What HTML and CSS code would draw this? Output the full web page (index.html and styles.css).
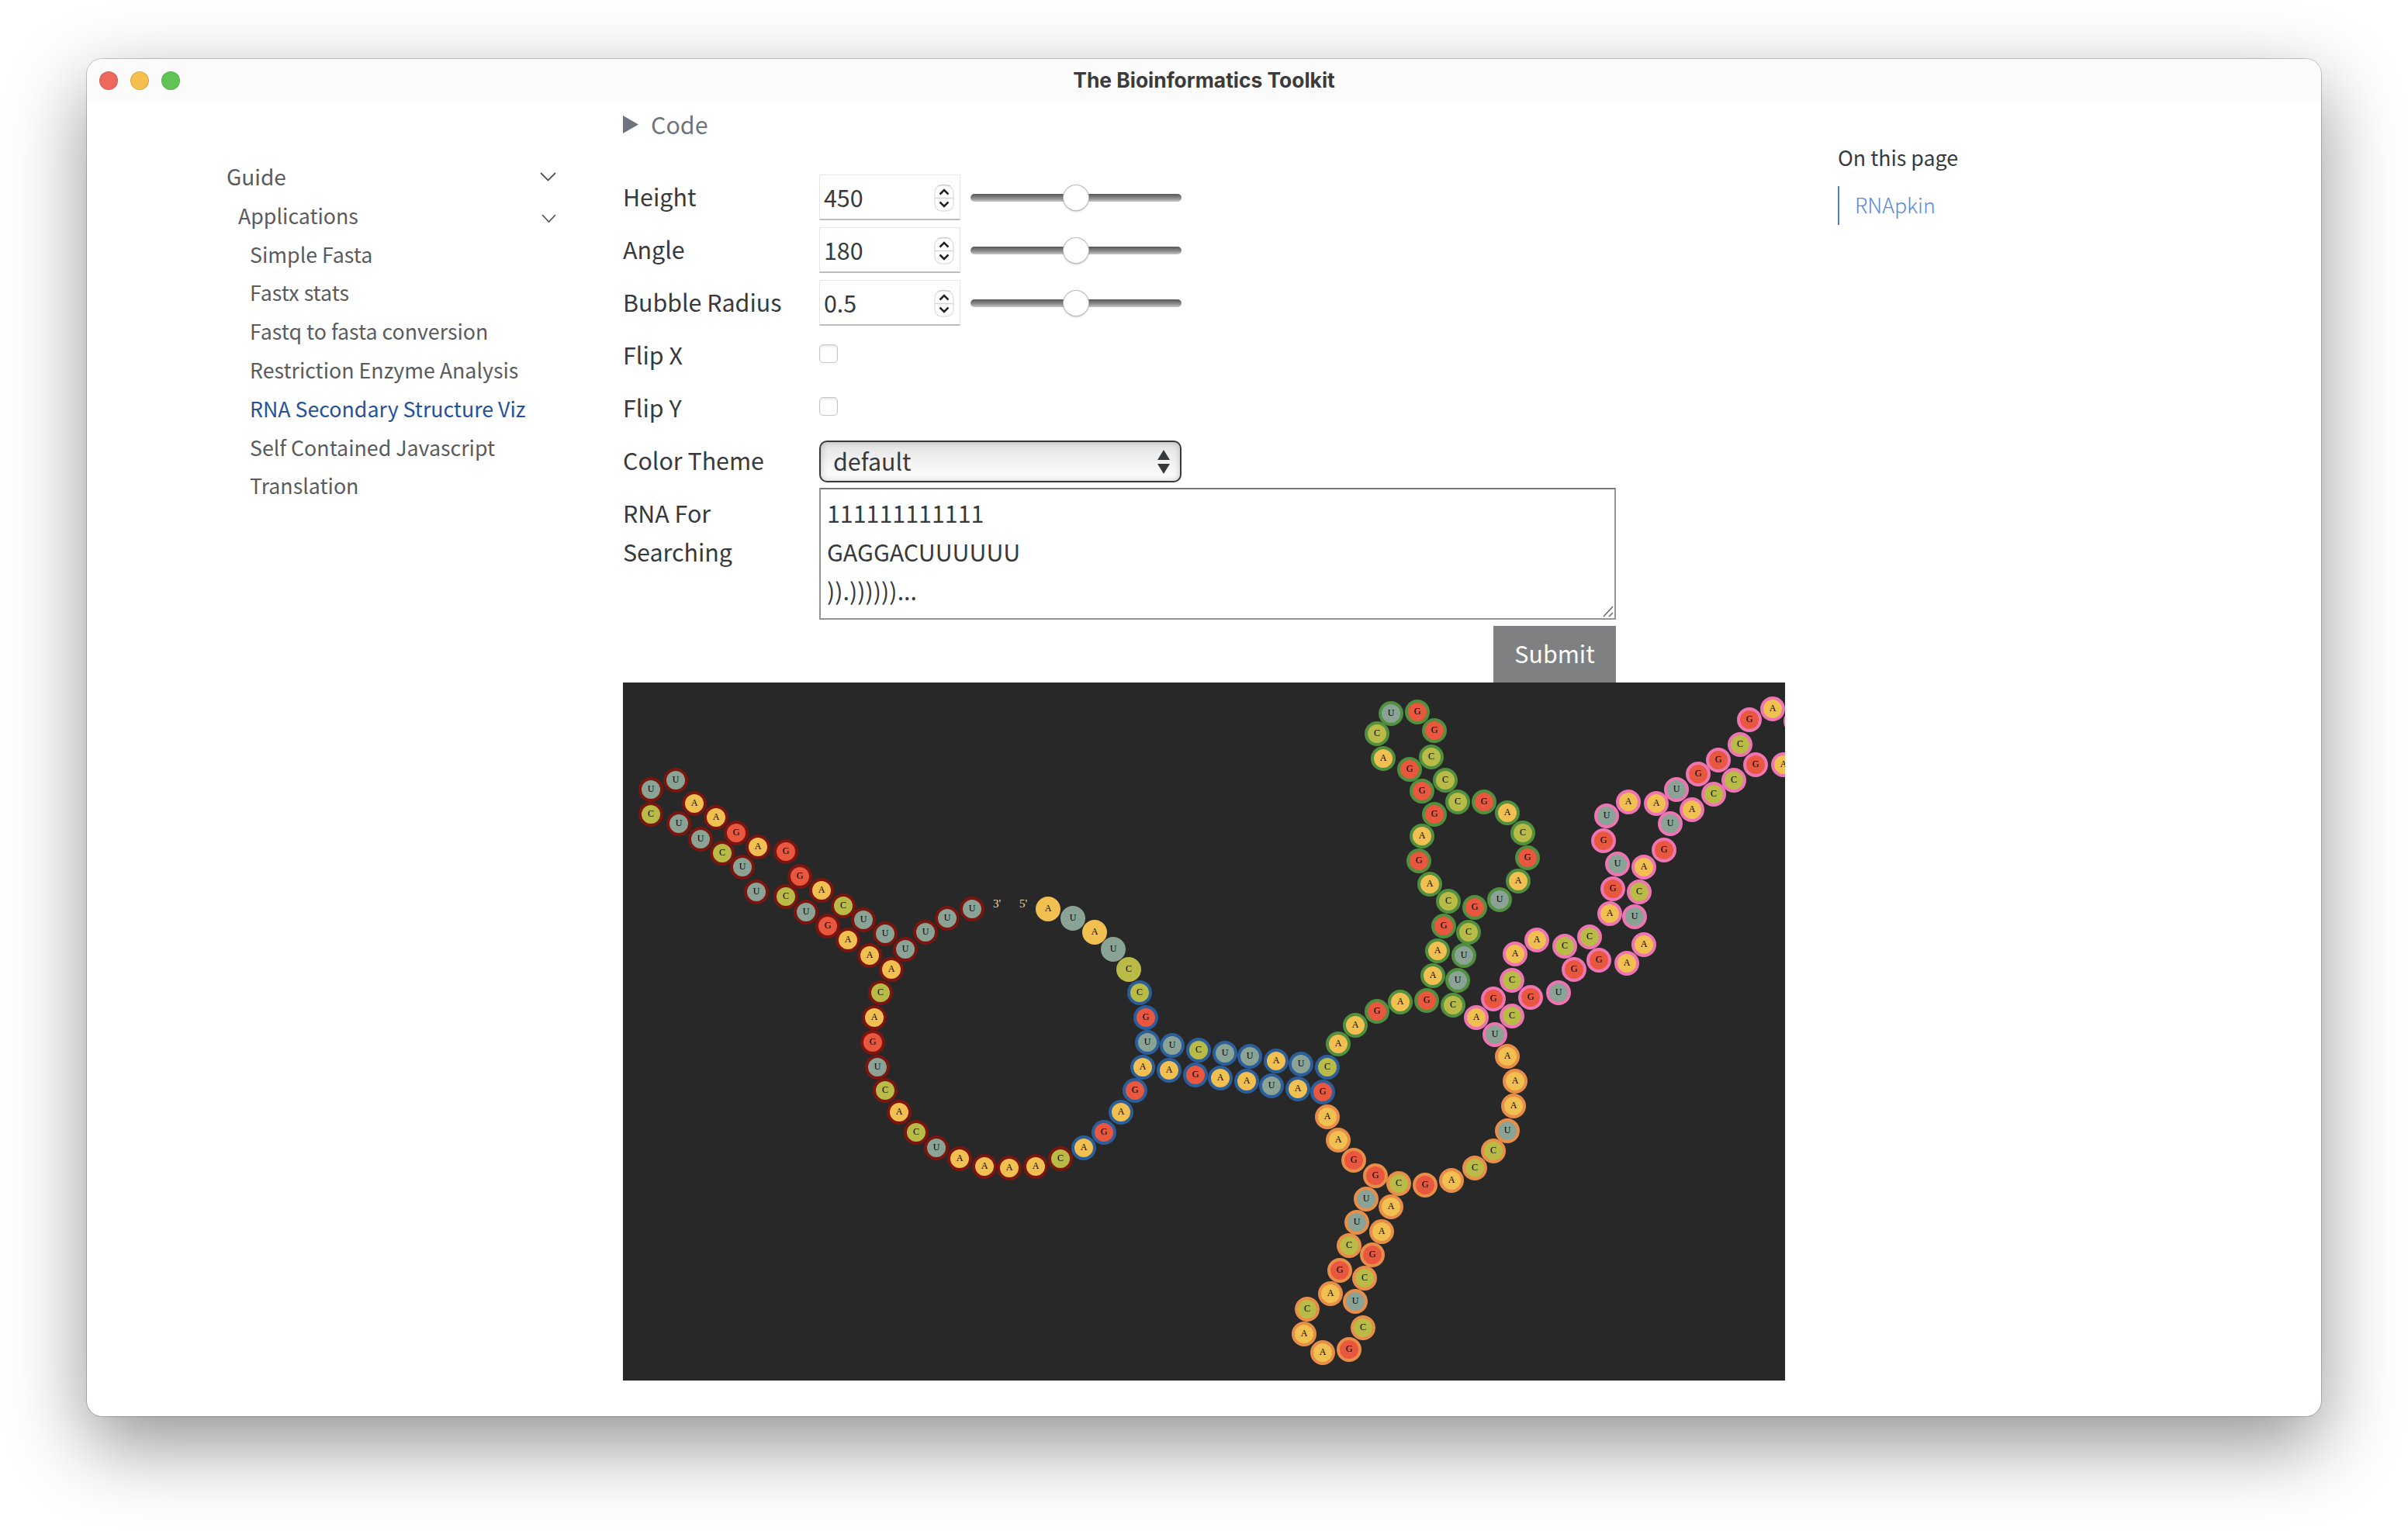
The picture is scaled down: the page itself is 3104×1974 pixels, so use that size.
FILE: index.html
```html
<!DOCTYPE html>
<html lang="en">
<head>
<meta charset="utf-8">
<title>The Bioinformatics Toolkit</title>
<link rel="stylesheet" href="styles.css">
</head>
<body>
<div class="window">
  <header class="titlebar">
    <div class="lights"><span class="light red"></span><span class="light yellow"></span><span class="light green"></span></div>
    <h1 class="title">The Bioinformatics Toolkit</h1>
  </header>
  <div class="content">
    <nav class="sidebar">
      <div class="nav-item level-1"><span>Guide</span><svg class="chevron" width="21" height="12" viewBox="0 0 21 12"><path d="M1 1l9.500 9.500L20 1"/></svg></div>
      <div class="nav-item level-2"><span>Applications</span><svg class="chevron small" width="19" height="12" viewBox="0 0 19 12"><path d="M1 1l8.500 9L18 1"/></svg></div>
      <a class="nav-item level-3">Simple Fasta</a>
      <a class="nav-item level-3">Fastx stats</a>
      <a class="nav-item level-3">Fastq to fasta conversion</a>
      <a class="nav-item level-3">Restriction Enzyme Analysis</a>
      <a class="nav-item level-3 active">RNA Secondary Structure Viz</a>
      <a class="nav-item level-3">Self Contained Javascript</a>
      <a class="nav-item level-3">Translation</a>
    </nav>
    <main class="main">
      <div class="code-toggle"><svg width="20" height="23" viewBox="0 0 20 23"><path d="M0 0L20 11.500L0 23z"/></svg><span>Code</span></div>
      <div class="form">
        <label class="label">Height</label>
        <div class="field">
          <div class="number"><span>450</span><svg class="stepper" width="26" height="38" viewBox="0 0 26 38"><use href="#stepper"/></svg></div>
          <div class="slider"><span class="thumb"></span></div>
        </div>
        <label class="label">Angle</label>
        <div class="field">
          <div class="number"><span>180</span><svg class="stepper" width="26" height="38" viewBox="0 0 26 38"><use href="#stepper"/></svg></div>
          <div class="slider"><span class="thumb"></span></div>
        </div>
        <label class="label">Bubble Radius</label>
        <div class="field">
          <div class="number"><span>0.5</span><svg class="stepper" width="26" height="38" viewBox="0 0 26 38"><use href="#stepper"/></svg></div>
          <div class="slider"><span class="thumb"></span></div>
        </div>
        <label class="label">Flip X</label>
        <div class="field"><span class="checkbox"></span></div>
        <label class="label">Flip Y</label>
        <div class="field"><span class="checkbox"></span></div>
        <label class="label">Color Theme</label>
        <div class="field">
          <div class="select"><span>default</span><svg width="16" height="31" viewBox="0 0 16 31"><path d="M8 0L16 13H0zM0 18H16L8 31z"/></svg></div>
        </div>
        <label class="label">RNA For Searching</label>
        <div class="area">
          <div class="area-text">111111111111<br>GAGGACUUUUUU<br>)).))))))...</div>
          <svg class="grip" width="14" height="15" viewBox="0 0 14 15"><path d="M1 14L13 1M8 14L13 9"/></svg>
        </div>
      </div>
      <div class="actions"><button class="submit">Submit</button></div>
      <svg class="plot" id="plot" width="1498" height="900" viewBox="803 880 1498 900"></svg>
    </main>
    <aside class="toc">
      <div class="toc-title">On this page</div>
      <a class="toc-link">RNApkin</a>
    </aside>
  </div>
</div>
<svg class="defs" width="0" height="0">
  <defs>
    <g id="stepper">
      <rect x="1" y="4" width="24" height="33" rx="9" fill="#fff" stroke="#e2e2e2" stroke-width="1.500"/>
      <path d="M5 4.500Q13 2 21 4.500" fill="none" stroke="#c4c4c4" stroke-width="1"/>
      <path d="M1 20.500H25" stroke="#d6d6d6" stroke-width="1.500"/>
      <path d="M7.500 15.500L13 10L18.500 15.500M7.500 25.500L13 31L18.500 25.500" fill="none" stroke="#222" stroke-width="2.500"/>
    </g>
  </defs>
</svg>
<script src="plot.js"></script>
</body>
</html>
```
FILE: styles.css
```css
* { box-sizing: border-box; }
body {
  margin: 0;
  padding: 76px 112px 0;
  height: 1974px;
  overflow: hidden;
  background: #fff;
  color: #373a3c;
  font-family: "Noto Sans CJK SC", "Noto Sans", sans-serif;
  font-size: 30.4px;
}
.window {
  width: 2880px;
  height: 1750px;
  border-radius: 20px;
  background: #fff;
  overflow: hidden;
  box-shadow: 0 0 0 1px rgba(0, 0, 0, 0.2), 0 36px 100px rgba(0, 0, 0, 0.43);
}
.titlebar {
  display: grid;
  grid-template-columns: 1fr auto 1fr;
  align-items: center;
  height: 56px;
  padding: 0 16px;
  background: #fbfbfc;
}
.lights { display: flex; gap: 16px; }
.light { width: 24px; height: 24px; border-radius: 50%; border: 1px solid rgba(0, 0, 0, 0.12); }
.red { background: #ed695e; }
.yellow { background: #f5bf4f; }
.green { background: #61c555; }
.title {
  margin: 0;
  padding-bottom: 2px;
  font: 700 26.4px/54px Inter, "Liberation Sans", sans-serif;
  color: #3b3b3b;
}
.content {
  display: grid;
  grid-template-columns: 424px 1498px 500px;
  column-gap: 86px;
  padding-left: 181px;
}
.sidebar { padding-top: 71px; color: #5a5b5c; font-size: 26.750px; }
.nav-item {
  display: flex;
  justify-content: space-between;
  align-items: center;
  height: 49.800px;
  line-height: 49.800px;
}
.level-1 { font-size: 28px; }
.level-1 span { margin-left: -1px; }
.level-2 { padding-left: 14px; }
.level-3 { padding-left: 29px; }
.active { color: #275198; }
.chevron { fill: none; stroke: #555; stroke-width: 1.800; }
.chevron.small { margin-top: 8px; }
.code-toggle {
  display: flex;
  align-items: center;
  gap: 16px;
  height: 89px;
  padding: 1px 0 34px;
  line-height: 50px;
  color: #6c757d;
}
.code-toggle svg { fill: #6c757d; }
.form {
  display: grid;
  grid-template-columns: 253px 1027px;
  grid-template-rows: repeat(6, 68px) 170px;
}
.label { padding-top: 7px; line-height: 50px; width: 210px; }
.field { display: flex; align-items: flex-start; }
.number {
  display: flex;
  justify-content: space-between;
  align-items: center;
  width: 182px;
  height: 59px;
  margin-top: 4px;
  padding: 0 7px 0 5px;
  border: 1px solid #e6e6e6;
  border-bottom: 2px solid #bdbdbd;
  line-height: 56px;
}
.slider {
  display: flex;
  justify-content: center;
  align-items: center;
  width: 272px;
  height: 10px;
  margin: 29px 0 0 13px;
  border-radius: 5px;
  background: linear-gradient(#555, #8a8a8a 55%, #c8c8c8);
}
.thumb {
  flex: none;
  width: 32px;
  height: 32px;
  border-radius: 50%;
  background: #fff;
  box-shadow: 0 0 0 1px #bbb, 0 1px 3px rgba(0, 0, 0, 0.4);
}
.checkbox {
  width: 24px;
  height: 24px;
  margin-top: 19px;
  border: 1.500px solid #c6c6c6;
  border-radius: 5px;
  box-shadow: inset 0 2px 3px rgba(0, 0, 0, 0.1);
}
.select {
  display: flex;
  justify-content: space-between;
  align-items: center;
  width: 467px;
  height: 54px;
  margin-top: 7px;
  padding: 0 13px 0 16px;
  border: 2px solid #373a3c;
  border-radius: 10px;
  background: linear-gradient(#e4e4e4, #fff);
  box-shadow: inset 0 0 8px rgba(0, 0, 0, 0.22);
  line-height: 46px;
}
.select span { padding-bottom: 2px; }
.select svg { fill: #373a3c; }
.area {
  position: relative;
  height: 170px;
  border: 2px solid #959595;
  border-top-color: #767676;
}
.area-text { padding: 5px 8px; line-height: 50px; }
.grip { position: absolute; right: 1px; bottom: 1px; fill: none; stroke: #666; stroke-width: 1.500; }
.actions { display: flex; justify-content: flex-end; width: 1280px; height: 81px; padding-top: 8px; }
.submit {
  width: 158px;
  height: 73px;
  border: 0;
  padding: 0 0 3px;
  background: #7e8081;
  color: #fff;
  font: inherit;
  line-height: 66px;
}
.plot { display: block; background: #282828; }
.plot text { font: 12px "Liberation Serif", serif; text-anchor: middle; fill: #000; }
.plot .end { font-size: 15px; fill: #ebdbb2; }
.toc { margin-left: -18px; padding-top: 46px; font-size: 26.750px; }
.toc-title { height: 62px; line-height: 50px; }
.toc-link {
  display: block;
  height: 50px;
  padding-left: 20px;
  border-left: 2px solid #4a7fd6;
  line-height: 47px;
  font-weight: 300;
  color: #5388e0;
}
.defs { position: absolute; }
```
FILE: plot.js
```js
// Each strand: ring colour, then base letter with its x,y in drawing units.
const strands = [
  [null, "A1351,1172 U1383,1184 A1411,1202 U1435,1224 C1455,1250"],
  ["#2a5f9c", "C1469,1280 G1477,1312 U1479,1344 U1511,1348 C1545,1354 U1579,1358 U1611,1362 A1645,1368 U1677,1372 C1711,1376"],
  ["#51903f", "A1725,1346 A1747,1322 G1775,1304 A1805,1292 G1839,1290 A1847,1258 A1853,1226 G1861,1194 C1867,1162 A1843,1140 G1829,1110 A1833,1078 G1849,1050 G1833,1020 G1817,992 A1783,978 C1775,946 U1793,920 G1827,918 G1849,942 C1845,976 C1863,1006 C1879,1034 G1913,1034 A1943,1048 C1963,1074 G1969,1106 A1957,1136 U1933,1160 G1901,1170 C1893,1202 U1887,1232 U1879,1264 C1873,1296"],
  ["#ee74b4", "A1903,1312 G1925,1288 C1949,1264 A1953,1230 A1981,1212 C2017,1220 C2049,1208 A2075,1178 G2079,1146 U2085,1114 G2067,1084 U2071,1052 A2099,1034 A2135,1036 U2161,1018 G2189,998 G2215,980 C2243,960 G2255,928 A2285,914 A2315,930 A2299,986 G2263,986 C2235,1006 C2209,1024 A2181,1044 U2153,1062 G2145,1096 A2119,1118 C2113,1150 U2107,1182 A2119,1218 A2097,1242 G2061,1238 G2029,1250 U2009,1280 G1973,1286 C1949,1310 U1927,1334"],
  ["#e88e48", "A1943,1362 A1953,1394 A1951,1426 U1943,1458 C1925,1484 C1901,1506 A1871,1522 G1837,1528 C1803,1526 A1793,1556 A1781,1588 G1769,1618 C1759,1648 U1747,1678 C1757,1712 G1739,1740 A1705,1744 A1681,1720 C1685,1688 A1715,1668 G1727,1638 C1739,1606 U1749,1576 U1761,1546 G1773,1516 G1745,1496 A1725,1470 A1711,1440"],
  ["#2a5f9c", "G1705,1408 A1673,1404 U1639,1400 A1607,1394 A1573,1390 G1541,1386 A1507,1380 A1473,1376 G1463,1406 A1445,1434 G1423,1460 A1397,1480"],
  ["#7a150f", "C1367,1494 A1335,1504 A1301,1506 A1269,1504 A1237,1494 U1207,1480 C1181,1460 A1159,1434 C1141,1406 U1131,1376 G1125,1344 A1127,1312 C1135,1280 A1149,1250 A1121,1232 A1093,1212 G1067,1194 U1039,1176 C1013,1156 U975,1150 U957,1118 C931,1100 U903,1082 U875,1062 C839,1050 U839,1018 U871,1006 A895,1036 A923,1054 G949,1074 A977,1092 G1013,1098 G1031,1130 A1059,1148 C1087,1168 U1113,1186 U1141,1204 U1167,1224 U1193,1202 U1221,1184 U1253,1172"]
];
const fills = { A: "#f2bf51", U: "#8aa394", C: "#b9bb46", G: "#e9573f" };
const plot = document.getElementById("plot");

function add(tag, attrs, text) {
  const el = document.createElementNS("http://www.w3.org/2000/svg", tag);
  for (const name in attrs) el.setAttribute(name, attrs[name]);
  if (text) el.textContent = text;
  plot.appendChild(el);
}

for (const [ring, bases] of strands) {
  for (const item of bases.split(" ")) {
    const base = item[0];
    const [x, y] = item.slice(1).split(",").map(Number);
    add("circle", { cx: x, cy: y, r: 14, fill: fills[base], stroke: ring || fills[base], "stroke-width": 4 });
    // Bases whose centre is past the right edge carry no visible letter.
    if (x < 2301) add("text", { x: x, y: y + 3 }, base);
  }
}
add("text", { x: 1285, y: 1170, class: "end" }, "3'");
add("text", { x: 1319, y: 1170, class: "end" }, "5'");
```
